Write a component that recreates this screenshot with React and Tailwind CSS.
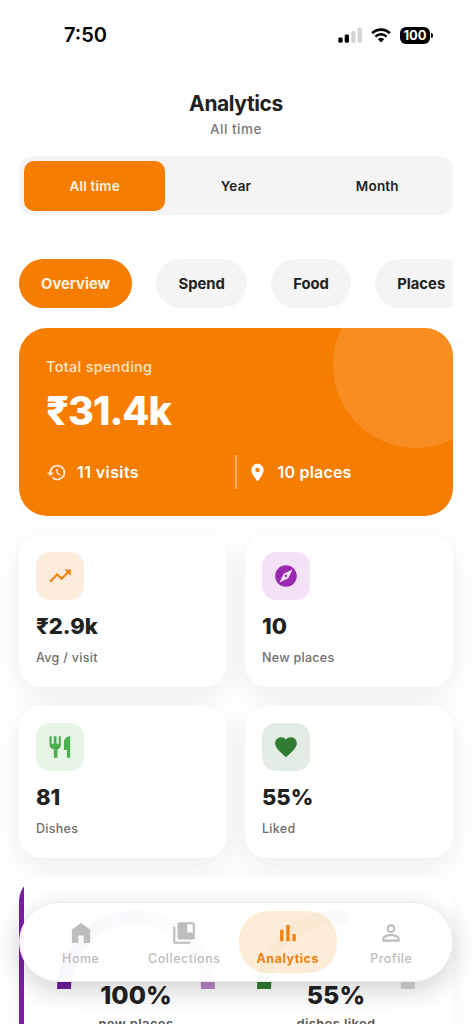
import React from "react";
import {
  MdHistory,
  MdPlace,
  MdTrendingUp,
  MdExplore,
  MdFavorite,
  MdPersonOutline,
} from "react-icons/md";

const periods = ["All time", "Year", "Month"];
const sections = ["Overview", "Spend", "Food", "Places"];

const ForkKnifeIcon = ({ className }) => (
  <svg viewBox="0 0 24 24" fill="currentColor" className={className}>
    <path d="M2.300 2h2v7h2V2h2.500v7h2V2h2v8.200c0 1.900-1.300 3.500-3.100 4V22H6.300v-7.800c-2.200-.4-4-2-4-4z" />
    <path d="M21.400 2v20h-3v-7.300h-2.800V7.500C15.600 4.500 18 2 21.400 2z" />
  </svg>
);

const HomeIcon = ({ className }) => (
  <svg viewBox="0 0 24 24" fill="currentColor" className={className}>
    <path d="M12 2.700 3.600 8.700V21.300H9.500v-7h5v7h5.900V8.700z" />
  </svg>
);

const CollectionsIcon = ({ className }) => (
  <svg viewBox="0 0 24 24" fill="currentColor" className={className}>
    <path d="M3 6a1 1 0 0 0-1 1v13a2 2 0 0 0 2 2h13a1 1 0 0 0 0-2H4V7a1 1 0 0 0-1-1z" />
    <path d="M20 2H8a2 2 0 0 0-2 2v12a2 2 0 0 0 2 2h12a2 2 0 0 0 2-2V4a2 2 0 0 0-2-2zm0 10.500-2.500-1.700-2.500 1.700V4h5z" />
  </svg>
);

const BarsIcon = ({ className }) => (
  <svg viewBox="0 0 24 24" fill="currentColor" className={className}>
    <rect x="4.700" y="8.900" width="3.100" height="10.600" rx="0.300" />
    <rect x="10.400" y="4.600" width="3.100" height="14.900" rx="0.300" />
    <rect x="16.100" y="12.900" width="3.100" height="6.600" rx="0.300" />
  </svg>
);

const stats = [
  {
    value: "₹2.9k",
    label: "Avg / visit",
    icon: MdTrendingUp,
    color: "bg-[#fdecdc] text-[#f08012]",
  },
  {
    value: "10",
    label: "New places",
    icon: MdExplore,
    color: "bg-[#f3e2f5] text-[#9c27b0]",
  },
  {
    value: "81",
    label: "Dishes",
    icon: ForkKnifeIcon,
    color: "bg-[#e7f4e8] text-[#4caf50]",
  },
  {
    value: "55%",
    label: "Liked",
    icon: MdFavorite,
    color: "bg-[#e3ece3] text-[#2e7d32]",
  },
];

const tabs = [
  { name: "Home", icon: HomeIcon },
  { name: "Collections", icon: CollectionsIcon },
  { name: "Analytics", icon: BarsIcon, active: true },
  { name: "Profile", icon: MdPersonOutline },
];

const StatusBar = () => (
  <div className="flex h-[70px] items-center justify-between pr-[39px] pl-[64px] text-black">
    <span className="text-[20px] font-semibold">7:50</span>
    <div className="flex items-center">
      <svg width="24" height="16" viewBox="0 0 24 16">
        <rect x="0.300" y="10.500" width="4.300" height="5.200" rx="1.400" />
        <rect x="6.700" y="7.600" width="4.300" height="8.100" rx="1.400" />
        <rect x="13.200" y="4" width="4.300" height="11.700" rx="1.400" fill="#d4d4d4" />
        <rect x="19.500" y="0.700" width="4.300" height="15" rx="1.400" fill="#d4d4d4" />
      </svg>
      <svg width="20" height="15" viewBox="0 0 20 15" className="ml-[9px]">
        <path d="M1.200 5.200a12.600 12.600 0 0 1 17.600 0" fill="none" stroke="#000" strokeWidth="2.600" />
        <path d="M4.400 8.600a8 8 0 0 1 11.200 0" fill="none" stroke="#000" strokeWidth="2.500" />
        <path d="M6.900 11.300a4.500 4.500 0 0 1 6.200 0L10 14.500z" />
      </svg>
      <div className="ml-[9px] flex h-[17px] w-[30px] items-center justify-center rounded-[6px] bg-black text-[13px] leading-[17px] font-bold text-white">
        100
      </div>
      <div className="ml-px h-[5px] w-[2px] rounded-r-full bg-black" />
    </div>
  </div>
);

const Summary = () => (
  <div className="relative mt-[20px] h-[187.5px] overflow-hidden rounded-[28px] bg-[#f77d00] px-[27px] pt-[28px] text-white">
    <div className="absolute -top-[46px] left-[314px] size-[166px] rounded-full bg-white/[0.13]" />
    <p className="text-[14.5px] leading-[22px] font-medium tracking-[0.3px] text-[#ffe6c8]">
      Total spending
    </p>
    <p className="mt-[9px] text-[39.5px] leading-[48px] font-extrabold tracking-[-1px]">
      ₹31.4k
    </p>
    <div className="mt-[20px] flex h-[34px] items-center text-[16px] font-semibold">
      <div className="flex w-[189px] items-center">
        <MdHistory className="size-[21px] text-[#fff0de]" />
        <span className="ml-[10px] tracking-[0.4px]">11 visits</span>
      </div>
      <div className="h-[34px] w-[1.5px] bg-white/40" />
      <MdPlace className="ml-[10px] size-[21px]" />
      <span className="ml-[10px] tracking-[0.2px]">10 places</span>
    </div>
  </div>
);

const StatCard = ({ value, label, icon: Icon, color }) => (
  <div className="h-[152px] rounded-[22px] bg-white px-[17px] pt-[17px] shadow-[0_8px_30px_rgba(0,0,0,0.08)]">
    <div className={`flex size-[48px] items-center justify-center rounded-[14px] ${color}`}>
      <Icon className="size-[26px]" />
    </div>
    <p className="mt-[12px] text-[22px] leading-[28px] font-extrabold">{value}</p>
    <p className="mt-[9px] text-[12.5px] leading-[18px] font-medium tracking-[0.3px] text-[#6e6e6e]">
      {label}
    </p>
  </div>
);

const Gauge = ({ value, label, children }) => (
  <div className="flex w-[200px] flex-col items-center">
    <svg width="158" height="79" viewBox="0 0 158 79" fill="none" strokeWidth="14">
      {children}
    </svg>
    <p className="mt-[-9px] text-[25px] leading-[30px] font-extrabold">{value}</p>
    <p className="mt-[5px] text-[13px] leading-[18px] font-semibold tracking-[0.4px] text-[#555]">
      {label}
    </p>
  </div>
);

const TabBar = () => (
  <nav className="absolute top-[902px] right-[19px] left-[19px] flex h-[80px] items-center rounded-[40px] border border-[#ececec] bg-white/[0.97] px-[9px] shadow-[0_8px_28px_rgba(0,0,0,0.18)]">
    {tabs.map(({ name, icon: Icon, active }) => (
      <div
        key={name}
        className={`mx-[3px] flex h-[62px] flex-1 flex-col items-center rounded-[29px] pt-[9px] ${
          active ? "bg-[#f77d00]/15 font-bold text-[#f0820f]" : "font-medium text-[#bdbdbd]"
        }`}
      >
        <Icon className="size-[26px]" />
        <span className="mt-[5px] text-[12.5px] leading-[16px] tracking-[0.5px]">{name}</span>
      </div>
    ))}
  </nav>
);

const App = () => {
  return (
    <div className="relative h-[1024px] w-[472px] overflow-hidden bg-white font-['Inter',sans-serif] text-[#212121]">
      <StatusBar />

      <main className="px-[19px]">
        <header className="pt-[19px] text-center">
          <h1 className="text-[21px] leading-[29px] font-bold tracking-[-0.4px]">Analytics</h1>
          <p className="mt-px text-[13.500px] leading-[20px] font-medium tracking-[0.500px] text-[#777]">
            All time
          </p>
        </header>

        <div className="mt-[17px] flex h-[59px] rounded-[14px] bg-[#f4f4f4] px-[5px] pt-[5px] pb-[4px] text-[13.500px] font-semibold tracking-[0.200px]">
          {periods.map((period, i) => (
            <button
              key={period}
              className={`flex-1 rounded-[10px] pt-px ${i === 0 ? "bg-[#f77d00] text-[#fff3e0]" : ""}`}
            >
              {period}
            </button>
          ))}
        </div>

        <div className="mt-[44px] flex gap-[24.300px] overflow-hidden text-[14.800px] font-bold">
          {sections.map((section, i) => (
            <button
              key={section}
              className={`h-[49px] shrink-0 rounded-full px-[22px] pt-px ${
                i === 0 ? "bg-[#f77d00] text-[#fff3e0]" : "bg-[#f4f4f4]"
              }`}
            >
              {section}
            </button>
          ))}
        </div>

        <Summary />

        <div className="mt-[19.5px] grid grid-cols-2 gap-x-[18px] gap-y-[19px]">
          {stats.map((stat) => (
            <StatCard key={stat.label} {...stat} />
          ))}
        </div>

        <div className="mt-[19px] h-[220px] rounded-[24px] shadow-[0_8px_30px_rgba(0,0,0,0.04)]">
          <div className="relative flex h-full overflow-hidden rounded-[24px] bg-white px-[17px] pt-[33px]">
            <div className="absolute inset-y-0 left-0 w-[5px] bg-[#7b1fa2]" />
            <Gauge value="100%" label="new places">
              <defs>
                <linearGradient id="purple">
                  <stop offset="0" stopColor="#6a1b9a" />
                  <stop offset="1" stopColor="#ba84c9" />
                </linearGradient>
              </defs>
              <path d="M7 79a72 72 0 0 1 144 0" stroke="url(#purple)" />
            </Gauge>
            <Gauge value="55%" label="dishes liked">
              <path d="M7 79a72 72 0 0 1 144 0" stroke="#d6d6d6" />
              <path d="M7 79a72 72 0 0 1 144 0" stroke="#2e7d32" pathLength="100" strokeDasharray="55 100" />
            </Gauge>
          </div>
        </div>
      </main>

      <TabBar />
    </div>
  );
};

export default App;
